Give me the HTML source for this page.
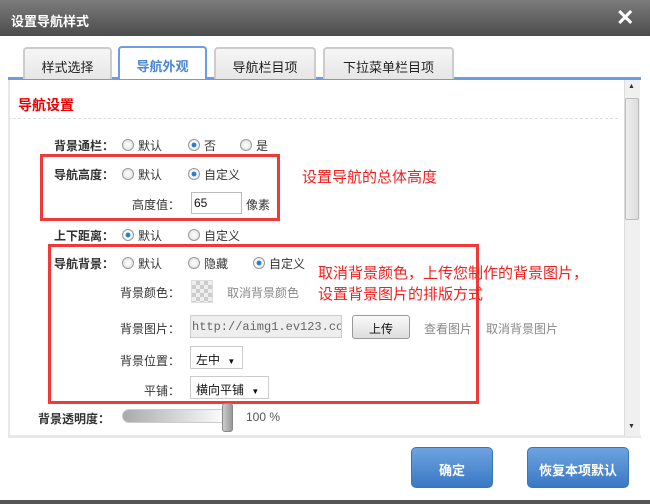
<!DOCTYPE html>
<html><head><meta charset="utf-8"><style>
*{margin:0;padding:0;box-sizing:border-box}
body{width:650px;height:504px;overflow:hidden;background:#fff;font-family:"Liberation Sans","Noto Sans CJK SC",sans-serif;font-size:12px;color:#333;position:relative}
.a{position:absolute;white-space:nowrap}
.title{left:0;top:0;width:650px;height:36px;background:linear-gradient(#7c7c7c,#4c4c4c);color:#fff;font-size:13px;font-weight:bold;padding:11px 0 0 11px}
.x{left:616px;top:5px;color:#fff;font-size:22px;font-weight:bold}
.tab{top:47px;height:32px;border:2px solid #ccc;border-bottom:none;border-radius:4px 4px 0 0;background:linear-gradient(#f6f6f6,#e6e6e6);font-size:13px;text-align:center;padding-top:8px;color:#222}
.tab.on{border-color:#6f9be0;background:#fff;color:#4a86d8;top:46px;height:33px}
.r{width:12px;height:12px;border-radius:50%;border:1px solid #999;background:radial-gradient(#fff,#ddd)}
.r.on{background:radial-gradient(#2a7fd0 30%,#fff 40%,#ddd)}
.lb{font-weight:bold;text-align:right;width:80px}
.sl{text-align:right;width:80px}
.red{border:3px solid #f03a3a}
.note{color:#f02020;font-size:15px}
.gray{color:#888}
.btn{top:447px;height:41px;border:1px solid #3d74b8;border-radius:5px;background:linear-gradient(#6ea3e0,#3a78c4);color:#fff;font-weight:bold;font-size:13px;text-align:center;padding-top:12px}
</style></head><body>
<div class="a title">设置导航样式</div>
<div class="a x">✕</div>
<div class="a" style="left:8px;top:77px;width:633px;height:3px;background:#6f9be0"></div>
<div class="a tab" style="left:23px;width:89px">样式选择</div>
<div class="a tab on" style="left:118px;width:89px;font-weight:bold">导航外观</div>
<div class="a tab" style="left:214px;width:102px">导航栏目项</div>
<div class="a tab" style="left:323px;width:131px">下拉菜单栏目项</div>
<div class="a" style="left:8px;top:80px;width:2px;height:357px;background:#e8e8e8"></div>
<div class="a" style="left:8px;top:435px;width:633px;height:3px;background:#e8e8e8"></div>
<div class="a" style="left:624px;top:80px;width:16px;height:356px;background:#f0f0f0;border-left:1px solid #ddd"></div>
<div class="a" style="left:625px;top:98px;width:14px;height:122px;background:linear-gradient(90deg,#eee,#ddd);border:1px solid #bbb;border-radius:2px"></div>
<div class="a" style="left:628px;top:83px;font-size:7px">▲</div>
<div class="a" style="left:628px;top:423px;font-size:7px">▼</div>
<div class="a" style="left:18px;top:95px;color:#e00;font-size:14px;font-weight:bold">导航设置</div>
<div class="a" style="left:8px;top:118px;width:610px;border-top:1px dashed #ddd"></div>

<div class="a lb" style="left:34px;top:137px">背景通栏：</div>
<div class="a r" style="left:122px;top:139px"></div><div class="a" style="left:138px;top:137px">默认</div>
<div class="a r on" style="left:188px;top:139px"></div><div class="a" style="left:204px;top:137px">否</div>
<div class="a r" style="left:240px;top:139px"></div><div class="a" style="left:256px;top:137px">是</div>

<div class="a red" style="left:40px;top:154px;width:240px;height:67px"></div>
<div class="a lb" style="left:34px;top:166px">导航高度：</div>
<div class="a r" style="left:122px;top:168px"></div><div class="a" style="left:138px;top:166px">默认</div>
<div class="a r on" style="left:188px;top:168px"></div><div class="a" style="left:204px;top:166px">自定义</div>
<div class="a note" style="left:302px;top:166px">设置导航的总体高度</div>
<div class="a sl" style="left:100px;top:196px">高度值：</div>
<div class="a" style="left:191px;top:192px;width:51px;height:22px;border:1px solid #bbb;padding:3px 2px;color:#111">65</div>
<div class="a" style="left:246px;top:196px">像素</div>

<div class="a lb" style="left:34px;top:227px">上下距离：</div>
<div class="a r on" style="left:122px;top:229px"></div><div class="a" style="left:138px;top:227px">默认</div>
<div class="a r" style="left:188px;top:229px"></div><div class="a" style="left:204px;top:227px">自定义</div>

<div class="a red" style="left:48px;top:244px;width:431px;height:160px"></div>
<div class="a lb" style="left:34px;top:255px">导航背景：</div>
<div class="a r" style="left:122px;top:257px"></div><div class="a" style="left:138px;top:255px">默认</div>
<div class="a r" style="left:188px;top:257px"></div><div class="a" style="left:204px;top:255px">隐藏</div>
<div class="a r on" style="left:253px;top:257px"></div><div class="a" style="left:269px;top:255px">自定义</div>
<div class="a note" style="left:318px;top:263px;line-height:21px">取消背景颜色，上传您制作的背景图片，<br>设置背景图片的排版方式</div>

<div class="a sl" style="left:100px;top:284px">背景颜色：</div>
<div class="a" style="left:191px;top:280px;width:22px;height:23px;border:1px solid #ddd;background:repeating-conic-gradient(#ccc 0 25%,#eee 0 50%) 0 0/8px 8px"></div>
<div class="a gray" style="left:227px;top:284px">取消背景颜色</div>

<div class="a sl" style="left:100px;top:320px">背景图片：</div>
<div class="a" style="left:190px;top:315px;width:152px;height:23px;border:1px solid #ccc;background:#eee;font-family:'Liberation Mono',monospace;color:#666;padding:4px 0 0 1px;overflow:hidden">http://aimg1.ev123.com</div>
<div class="a" style="left:352px;top:315px;width:58px;height:24px;border:1px solid #999;border-radius:3px;background:linear-gradient(#fafafa,#ddd);text-align:center;padding-top:4px;color:#111">上传</div>
<div class="a gray" style="left:424px;top:320px">查看图片</div>
<div class="a gray" style="left:486px;top:320px">取消背景图片</div>

<div class="a sl" style="left:100px;top:352px">背景位置：</div>
<div class="a" style="left:190px;top:346px;width:53px;height:23px;border:1px solid #ccc;padding:4px 5px;color:#111">左中 <span style="font-size:8px;margin-left:4px">▼</span></div>
<div class="a sl" style="left:100px;top:382px">平铺：</div>
<div class="a" style="left:190px;top:376px;width:79px;height:23px;border:1px solid #ccc;padding:4px 5px;color:#111">横向平铺 <span style="font-size:8px;margin-left:4px">▼</span></div>

<div class="a lb" style="left:30px;top:410px">背景透明度：</div>
<div class="a" style="left:122px;top:409px;width:106px;height:14px;border-radius:7px;background:linear-gradient(90deg,#aaa,#fff);border:1px solid #ccc"></div>
<div class="a" style="left:222px;top:403px;width:11px;height:29px;border-radius:3px;background:linear-gradient(90deg,#ccc,#999);border:1px solid #888"></div>
<div class="a" style="left:246px;top:410px;color:#555">100 %</div>

<div class="a btn" style="left:411px;width:82px">确定</div>
<div class="a btn" style="left:527px;width:102px">恢复本项默认</div>
<div class="a" style="left:0;top:500px;width:650px;height:4px;background:#555"></div>
</body></html>
